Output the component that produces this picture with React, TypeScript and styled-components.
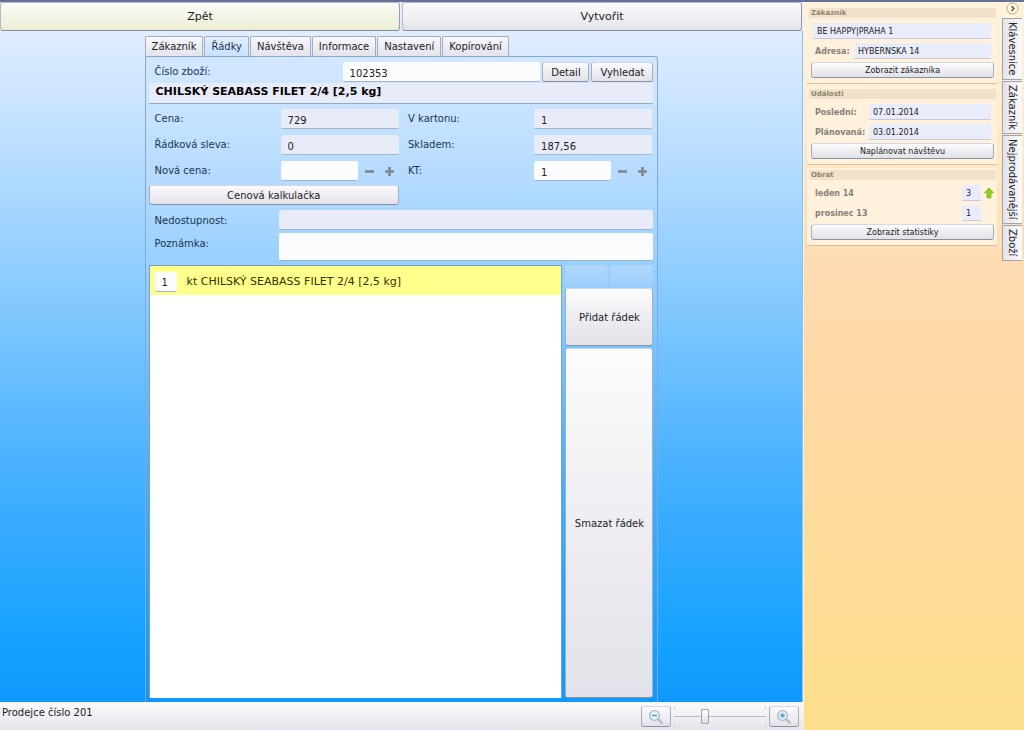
import React from 'react';
import styled, { createGlobalStyle, css } from 'styled-components';

const Global = createGlobalStyle`
  *, *::before, *::after { box-sizing: border-box; }
  html, body { margin: 0; }
  body, button, input { font-family: "DejaVu Sans", Verdana, sans-serif; font-size: 10px; color: #222; }
  button { cursor: pointer; margin: 0; padding: 0; }
`;

const INK = '#1c3450';
const FIELD = '#e8ebf8';

const Screen = styled.div`
  display: grid;
  grid-template-columns: 1fr 221px;
  min-height: 100vh;
  border-top: 2px solid #66719a;
`;

const Main = styled.main`
  display: flex;
  flex-direction: column;
  min-width: 0;
`;

const buttonFace = css`
  border: 1px solid #a9adba;
  border-top-color: #d3d8e4;
  border-bottom-color: #8d909c;
  border-radius: 3px;
  background: linear-gradient(#fcfcfd, #ececf1 55%, #e2e2ea);
`;

const TopBar = styled.div`
  display: flex;
  gap: 2px;
  padding-right: 1px;
  background: #e2efff;
`;

const TopButton = styled.button<{ $warm?: boolean }>`
  ${buttonFace}
  flex: 1;
  height: 29px;
  font-size: 11px;
  border-color: #b6bac8 #989ca9 #878b98 #b6bac8;
  background: ${p => (p.$warm ? 'linear-gradient(#fbfbf8, #f3f3e4 55%, #ecedd2)' : 'linear-gradient(#fafafd, #f0f0f4 50%, #e2e2ea)')};
`;

const Work = styled.section`
  flex: 1;
  display: flex;
  justify-content: center;
  padding-top: 5px;
  background: linear-gradient(#e0edff, #c3e1ff 14%, #a9d7ff 25%, #76c4ff 46%, #46b0ff 66%, #12a0ff 93%, #0f98fc);
  box-shadow: inset -1px 0 #7cc4fb;
`;

const Sheet = styled.div`
  display: flex;
  flex-direction: column;
  width: 64%;
  min-width: 513px;
`;

const Tabs = styled.nav`
  display: flex;
  gap: 1px;
`;

const Tab = styled.button<{ $on?: boolean }>`
  height: 20px;
  padding: 0 6px;
  white-space: nowrap;
  border: 1px solid #a6adbf;
  border-bottom: 0;
  border-radius: 2px 2px 0 0;
  color: ${p => (p.$on ? INK : '#222')};
  background: ${p => (p.$on ? 'linear-gradient(#e3efff, #c9e2ff)' : 'linear-gradient(#f8f8fb, #e3e4ec)')};
`;

const Panel = styled.div`
  flex: 1;
  display: flex;
  flex-direction: column;
  padding: 4px 4px 4px 3px;
  border: 1px solid #82a9d2;
  border-bottom: 0;
  border-radius: 0 3px 0 0;
  background: linear-gradient(#cbe4ff66, #b0d8ff33 30%, transparent 50%);
`;

const SearchRow = styled.div`
  display: flex;
  align-items: center;
  gap: 2px;
  padding-left: 6px;
`;

const Label = styled.label<{ $w?: number }>`
  flex: none;
  width: ${p => (p.$w ? `${p.$w}px` : 'auto')};
  color: ${INK};
  line-height: 22px;
  white-space: nowrap;
`;

const Input = styled.input<{ $edit?: boolean; $w?: number; $h?: number }>`
  flex: ${p => (p.$w ? 'none' : '1')};
  width: ${p => (p.$w ? `${p.$w}px` : '100%')};
  min-width: 0;
  height: ${p => p.$h ?? 20}px;
  padding: 3px 7px 0;
  border: 0;
  border-bottom: 1px solid #a3b3cc;
  border-radius: 2px;
  outline: 0;
  background: ${p => (p.$edit ? '#fbfcfd' : FIELD)};
`;

const Button = styled.button<{ $w?: number }>`
  ${buttonFace}
  flex: none;
  width: ${p => (p.$w ? `${p.$w}px` : '100%')};
  height: 20px;
`;

const Title = styled.h1`
  margin: 0 0 5px;
  height: 21px;
  padding: 0 7px;
  font-size: 11px;
  line-height: 18px;
  color: #000;
  background: ${FIELD};
  border-bottom: 1px solid #93a9c6;
`;

const Form = styled.div`
  display: grid;
  grid-template-columns: 126px 127fr 126px 118fr;
  grid-auto-rows: 20px;
  row-gap: 6px;
  align-items: center;
  padding: 0 1px 0 6px;
`;

const Cell = styled.div<{ $gap?: boolean }>`
  display: flex;
  align-items: center;
  min-width: 0;
  margin-right: ${p => (p.$gap ? 9 : 0)}px;
`;

const Step = styled.button`
  width: 11px;
  height: 11px;
  margin-left: 6px;
  border: 0;
  background: none;
  line-height: 0;
  & + & { margin-left: 9px; }
`;

const CalcRow = styled.div`
  display: flex;
  width: 50%;
  margin-top: 4px;
  padding-right: 2px;
`;

const Notes = styled.div`
  display: grid;
  grid-template-columns: 124px 1fr;
  grid-template-rows: 20px auto;
  row-gap: 3px;
  align-items: start;
  margin: 5px 0 4px;
  padding-left: 6px;
`;

const Lower = styled.div`
  flex: 1;
  display: flex;
  gap: 3px;
`;

const List = styled.ul`
  flex: 1;
  margin: 0;
  padding: 0;
  list-style: none;
  background: #fff;
  border: 1px solid #7f9dba;
  border-right-color: #6ea5d5;
  border-bottom: 0;
`;

const ListRow = styled.li`
  display: flex;
  align-items: center;
  gap: 10px;
  height: 29px;
  padding: 2px 5px 0;
  font-size: 11px;
  color: #333300;
  background: #ffff8c;
`;

const Side = styled.div`
  display: flex;
  flex-direction: column;
  gap: 2px;
  width: 88px;
`;

const Ghosts = styled.div`
  display: flex;
  gap: 2px;
  height: 21px;
`;

const Ghost = styled.button`
  flex: 1;
  border: 1px solid #a5d2fb;
  border-radius: 2px;
  background: linear-gradient(#b2d8fb, #9dcffc);
`;

const TallButton = styled.button<{ $grow?: boolean }>`
  ${buttonFace}
  flex: ${p => (p.$grow ? '1' : '0 0 58px')};
`;

const Status = styled.footer`
  display: flex;
  align-items: flex-start;
  height: 28px;
  padding: 4px 4px 0 2px;
  background: linear-gradient(#fbfbfd, #e4e4ec);
`;

const StatusText = styled.span`
  flex: 1;
  line-height: 14px;
`;

const ZoomButton = styled.button`
  ${buttonFace}
  width: 30px;
  height: 21px;
  line-height: 0;
`;

const Slider = styled.input`
  width: 92px;
  height: 21px;
  margin: 0 3px;
  appearance: none;
  background:
    linear-gradient(#b9bcc4, #b9bcc4) center / 100% 1px no-repeat,
    linear-gradient(#c9ccd4, #c9ccd4) left top / 1px 3px no-repeat,
    linear-gradient(#c9ccd4, #c9ccd4) right top / 1px 3px no-repeat,
    linear-gradient(#c9ccd4, #c9ccd4) left bottom / 1px 3px no-repeat,
    linear-gradient(#c9ccd4, #c9ccd4) right bottom / 1px 3px no-repeat;
  &::-webkit-slider-thumb {
    appearance: none;
    width: 8px;
    height: 15px;
    border: 1px solid #a0a3ab;
    border-radius: 1px;
    background: linear-gradient(#fff, #dcdde4);
  }
`;

const Aside = styled.aside`
  display: flex;
  align-items: flex-start;
  gap: 5px;
  padding-left: 3px;
  border-left: 1px solid #fff0e6;
  background: linear-gradient(#fff3dc, #ffecce 14%, #fedbb0 37%, #fed9a4 55%, #fcdf8c);
`;

const Cards = styled.div`
  flex: 1;
  display: flex;
  flex-direction: column;
  gap: 3px;
  min-width: 0;
  padding-top: 4px;
`;

const Card = styled.section`
  height: 78px;
  padding: 2px 1px 0 2px;
  background: #fff1dc;
  border-bottom: 1px solid #d3bfa2;
`;

const CardTitle = styled.h2`
  margin: 0;
  height: 10px;
  padding-left: 2px;
  font-size: 7px;
  line-height: 10px;
  color: #8d8373;
  background: #f0e1c8;
`;

const Lines = styled.div`
  display: flex;
  flex-direction: column;
  gap: 4px;
  padding: 5px 5px 3px 4px;
`;

const Line = styled.div<{ $flush?: boolean }>`
  display: flex;
  align-items: center;
  height: 16px;
  padding-left: ${p => (p.$flush ? 0 : 2)}px;
`;

const SmallLabel = styled.label<{ $w?: number }>`
  flex: ${p => (p.$w ? 'none' : '1')};
  width: ${p => (p.$w ? `${p.$w}px` : 'auto')};
  font-size: 8px;
  font-weight: bold;
  color: #858079;
`;

const SmallInput = styled.input<{ $w?: number }>`
  flex: ${p => (p.$w ? 'none' : '1')};
  width: ${p => (p.$w ? `${p.$w}px` : 'auto')};
  min-width: 0;
  height: 16px;
  padding: 1px 4px 0;
  border: 0;
  border-bottom: 1px solid #c9c8d6;
  border-radius: 1px;
  outline: 0;
  font-size: 8px;
  background: #e9ecfa;
`;

const ArrowSlot = styled.span`
  width: 10px;
  padding-left: 3px;
  line-height: 0;
`;

const CardAction = styled.div`
  padding: 0 2px;
`;

const SmallButton = styled.button`
  ${buttonFace}
  display: block;
  width: 100%;
  height: 16px;
  font-size: 8px;
`;

const Rail = styled.div`
  display: flex;
  flex-direction: column;
  gap: 1px;
  width: 22px;
`;

const Collapse = styled.button`
  width: 13px;
  height: 13px;
  margin: 0 0 2px 4px;
  border: 0;
  background: none;
  line-height: 0;
`;

const RailTab = styled.button<{ $h: number }>`
  width: 20px;
  height: ${p => p.$h}px;
  border: 1px solid #a3a3ae;
  border-right: 0;
  background: linear-gradient(90deg, #e3e3ea, #fafafb);
  writing-mode: vertical-rl;
  white-space: nowrap;
`;

const Sign = ({ plus }: { plus?: boolean }) => (
  <svg width="11" height="11" viewBox="0 0 11 11">
    <path d={plus ? 'M1 5.5h9M5.5 1v9' : 'M1 5.5h9'} stroke="#7d858f" strokeWidth="2.6" fill="none" />
  </svg>
);

const Lens = ({ plus }: { plus?: boolean }) => (
  <svg width="16" height="16" viewBox="0 0 16 16" fill="none">
    <path d="M10.5 10.5l3.5 3.5" stroke="#b9bcc2" strokeWidth="2.4" strokeLinecap="round" />
    <circle cx="6.5" cy="6.5" r="4.8" fill="#edf5fa" stroke="#9bb9ca" strokeWidth="1.3" />
    <path d={plus ? 'M4 6.5h5M6.5 4v5' : 'M4 6.5h5'} stroke="#4d9cc4" strokeWidth="1.5" />
  </svg>
);

function Field({ id, label, value, gap }: { id: string; label: string; value: string; gap?: boolean }) {
  return (
    <>
      <Label htmlFor={id}>{label}</Label>
      <Cell $gap={gap}><Input id={id} defaultValue={value} readOnly /></Cell>
    </>
  );
}

function Stepper({ id, label, value, gap }: { id: string; label: string; value: string; gap?: boolean }) {
  return (
    <>
      <Label htmlFor={id}>{label}</Label>
      <Cell $gap={gap}>
        <Input id={id} defaultValue={value} $edit $w={77} />
        <Step aria-label="Ubrat"><Sign /></Step>
        <Step aria-label="Přidat"><Sign plus /></Step>
      </Cell>
    </>
  );
}

export default function App() {
  return (
    <>
      <Global />
      <Screen>
        <Main>
          <TopBar>
            <TopButton $warm>Zpět</TopButton>
            <TopButton>Vytvořit</TopButton>
          </TopBar>
          <Work>
            <Sheet>
              <Tabs>
                {['Zákazník', 'Řádky', 'Návštěva', 'Informace', 'Nastavení', 'Kopírování'].map(t => (
                  <Tab key={t} $on={t === 'Řádky'}>{t}</Tab>
                ))}
              </Tabs>
              <Panel>
                <SearchRow>
                  <Label htmlFor="code" $w={186}>Číslo zboží:</Label>
                  <Input id="code" defaultValue="102353" $edit />
                  <Button $w={47}>Detail</Button>
                  <Button $w={62}>Vyhledat</Button>
                </SearchRow>
                <Title>CHILSKÝ SEABASS FILET 2/4 [2,5 kg]</Title>
                <Form>
                  <Field id="price" label="Cena:" value="729" gap />
                  <Field id="carton" label="V kartonu:" value="1" />
                  <Field id="discount" label="Řádková sleva:" value="0" gap />
                  <Field id="stock" label="Skladem:" value="187,56" />
                  <Stepper id="newprice" label="Nová cena:" value="" gap />
                  <Stepper id="kt" label="KT:" value="1" />
                </Form>
                <CalcRow><Button>Cenová kalkulačka</Button></CalcRow>
                <Notes>
                  <Label htmlFor="out">Nedostupnost:</Label>
                  <Input id="out" readOnly />
                  <Label htmlFor="note">Poznámka:</Label>
                  <Input id="note" $edit $h={28} />
                </Notes>
                <Lower>
                  <List>
                    <ListRow>
                      <Input aria-label="Množství" defaultValue="1" $edit $w={22} />
                      <span>kt CHILSKÝ SEABASS FILET 2/4 [2,5 kg]</span>
                    </ListRow>
                  </List>
                  <Side>
                    <Ghosts>
                      <Ghost disabled aria-label="Nahoru" />
                      <Ghost disabled aria-label="Dolů" />
                    </Ghosts>
                    <TallButton>Přidat řádek</TallButton>
                    <TallButton $grow>Smazat řádek</TallButton>
                  </Side>
                </Lower>
              </Panel>
            </Sheet>
          </Work>
          <Status>
            <StatusText>Prodejce číslo 201</StatusText>
            <ZoomButton aria-label="Zmenšit"><Lens /></ZoomButton>
            <Slider type="range" aria-label="Měřítko" defaultValue={32} />
            <ZoomButton aria-label="Zvětšit"><Lens plus /></ZoomButton>
          </Status>
        </Main>
        <Aside>
          <Cards>
            <Card>
              <CardTitle>Zákazník</CardTitle>
              <Lines>
                <Line $flush>
                  <SmallInput aria-label="Zákazník" defaultValue="BE HAPPY|PRAHA 1" readOnly />
                </Line>
                <Line>
                  <SmallLabel htmlFor="addr" $w={39}>Adresa:</SmallLabel>
                  <SmallInput id="addr" defaultValue="HYBERNSKÁ 14" readOnly />
                </Line>
              </Lines>
              <CardAction><SmallButton>Zobrazit zákazníka</SmallButton></CardAction>
            </Card>
            <Card>
              <CardTitle>Události</CardTitle>
              <Lines>
                <Line>
                  <SmallLabel htmlFor="last" $w={54}>Poslední:</SmallLabel>
                  <SmallInput id="last" defaultValue="07.01.2014" readOnly />
                </Line>
                <Line>
                  <SmallLabel htmlFor="plan" $w={54}>Plánovaná:</SmallLabel>
                  <SmallInput id="plan" defaultValue="03.01.2014" readOnly />
                </Line>
              </Lines>
              <CardAction><SmallButton>Naplánovat návštěvu</SmallButton></CardAction>
            </Card>
            <Card>
              <CardTitle>Obrat</CardTitle>
              <Lines>
                <Line>
                  <SmallLabel htmlFor="jan">leden 14</SmallLabel>
                  <SmallInput id="jan" defaultValue="3" $w={19} readOnly />
                  <ArrowSlot>
                    <svg width="10" height="12" viewBox="0 0 10 12">
                      <path d="M5 1l4.5 4.8H7V11H3V5.8H.5z" fill="#8fce1c" stroke="#7dbb18" strokeWidth=".8" />
                    </svg>
                  </ArrowSlot>
                </Line>
                <Line>
                  <SmallLabel htmlFor="dec">prosinec 13</SmallLabel>
                  <SmallInput id="dec" defaultValue="1" $w={19} readOnly />
                  <ArrowSlot />
                </Line>
              </Lines>
              <CardAction><SmallButton>Zobrazit statistiky</SmallButton></CardAction>
            </Card>
          </Cards>
          <Rail>
            <Collapse aria-label="Skrýt panel">
              <svg width="13" height="13" viewBox="0 0 13 13" fill="none">
                <circle cx="6.5" cy="6.5" r="5.5" fill="#fffbe8" stroke="#c9a868" />
                <path d="M5.5 4L8 6.500 5.500 9" stroke="#5d4a20" strokeWidth="1.3" />
              </svg>
            </Collapse>
            <RailTab $h={62}>Klávesnice</RailTab>
            <RailTab $h={53}>Zákazník</RailTab>
            <RailTab $h={89}>Nejprodávanější</RailTab>
            <RailTab $h={36}>Zboží</RailTab>
          </Rail>
        </Aside>
      </Screen>
    </>
  );
}
